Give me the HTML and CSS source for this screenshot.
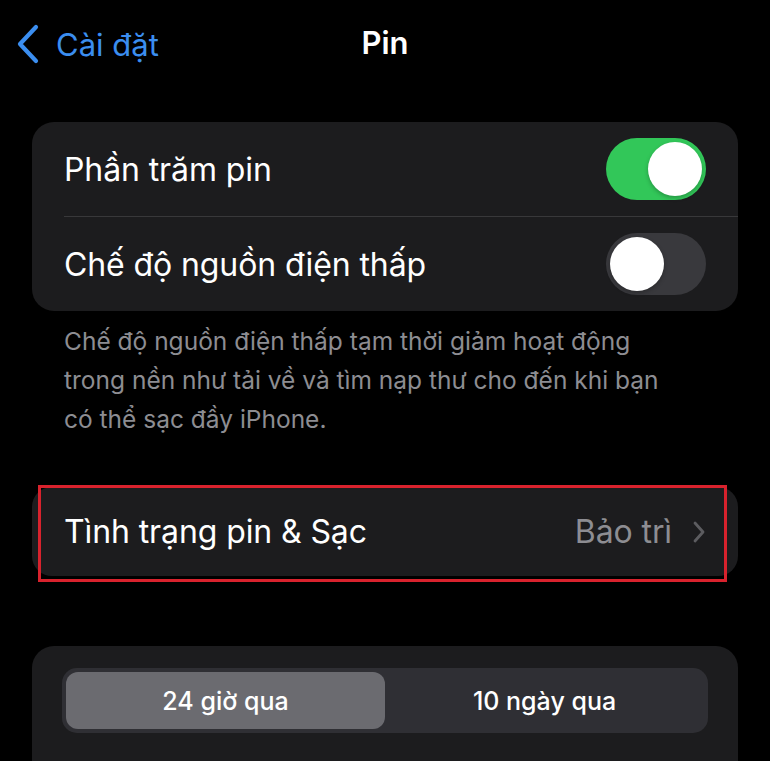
FILE: index.html
```html
<!DOCTYPE html>
<html lang="vi">
<head>
<meta charset="utf-8">
<link rel="stylesheet" href="styles.css">
</head>
<body>
<header class="nav">
  <div class="back">
    <svg class="chev" width="24" height="40" viewBox="0 0 24 40"><path d="M20 3 L4 20 L20 37" fill="none" stroke="#3b8ef0" stroke-width="4.2" stroke-linecap="round" stroke-linejoin="round"/></svg>
    <span class="back-label">Cài đặt</span>
  </div>
  <div class="title">Pin</div>
</header>

<section class="card">
  <div class="row">
    <span class="label">Phần trăm pin</span>
    <span class="toggle on"><span class="knob"></span></span>
  </div>
  <div class="sep"></div>
  <div class="row">
    <span class="label">Chế độ nguồn điện thấp</span>
    <span class="toggle off"><span class="knob"></span></span>
  </div>
</section>
<p class="footnote">Chế độ nguồn điện thấp tạm thời giảm hoạt động trong nền như tải về và tìm nạp thư cho đến khi bạn có thể sạc đầy iPhone.</p>

<section class="card card-health">
  <div class="row">
    <span class="label">Tình trạng pin &amp; Sạc</span>
    <span class="detail">Bảo trì
      <svg class="disc" width="14" height="24" viewBox="0 0 14 24"><path d="M3 3 L11 12 L3 21" fill="none" stroke="#5c5c60" stroke-width="2.8" stroke-linecap="round" stroke-linejoin="round"/></svg>
    </span>
  </div>
  <div class="highlight"></div>
</section>

<section class="card card-usage">
  <div class="segmented">
    <div class="seg selected">24 giờ qua</div>
    <div class="seg">10 ngày qua</div>
  </div>
</section>
</body>
</html>
```

FILE: styles.css
```css
html, body {
  margin: 0;
  padding: 0;
  background: #000;
  height: 100%;
  overflow: hidden;
}
body {
  font-family: Inter, "Noto Sans", "Liberation Sans", sans-serif;
  color: #fff;
  width: 770px;
}
.nav {
  position: relative;
  height: 90px;
}
.back {
  position: absolute;
  left: 16px;
  top: 24px;
  display: flex;
  align-items: center;
  gap: 16px;
  color: #3b8ef0;
}
.back-label {
  font-size: 31px;
  letter-spacing: 0;
}
.title {
  text-align: center;
  padding-top: 24px;
  font-size: 31px;
  font-weight: 600;
}
.card {
  position: relative;
  margin: 32px 32px 0;
  background: #1c1c1e;
  border-radius: 22px;
}
.row {
  display: flex;
  align-items: center;
  justify-content: space-between;
  height: 94px;
  padding: 0 32px;
}
.label {
  font-size: 32px;
  letter-spacing: -0.1px;
}
.sep {
  height: 1px;
  background: #38383a;
  margin-left: 32px;
}
.toggle {
  position: relative;
  width: 100px;
  height: 62px;
  border-radius: 31px;
  box-sizing: border-box;
  display: flex;
  align-items: center;
  padding: 0 4px;
}
.toggle.on { background: #32c759; justify-content: flex-end; }
.toggle.off { background: #39393d; justify-content: flex-start; }
.knob {
  width: 54px;
  height: 54px;
  border-radius: 50%;
  background: #fff;
  box-shadow: 0 2px 4px rgba(0,0,0,0.25);
}
.footnote {
  margin: 11px 0 0;
  padding: 0 80px 0 64px;
  font-size: 24.5px;
  line-height: 39px;
  color: #8d8d92;
}
.card-health {
  margin-top: 48px;
  border-radius: 20px;
}
.card-health .row { height: 89px; }
.detail {
  display: flex;
  align-items: center;
  gap: 20px;
  font-size: 32px;
  color: #8d8d92;
  letter-spacing: -0.1px;
}
.highlight {
  position: absolute;
  left: 6px;
  right: 11px;
  top: -2px;
  bottom: -6px;
  border: 3px solid #d8222d;
}
.card-usage {
  margin-top: 70px;
  height: 140px;
  padding: 22px 30px 0;
}
.segmented {
  display: grid;
  grid-template-columns: 1fr 1fr;
  height: 65px;
  background: #2f2f34;
  border-radius: 15px;
  padding: 4px;
  box-sizing: border-box;
}
.seg {
  display: flex;
  align-items: center;
  justify-content: center;
  font-size: 25px;
  font-weight: 500;
  color: #fff;
}
.seg.selected {
  background: #6b6b70;
  border-radius: 12px;
}
```
